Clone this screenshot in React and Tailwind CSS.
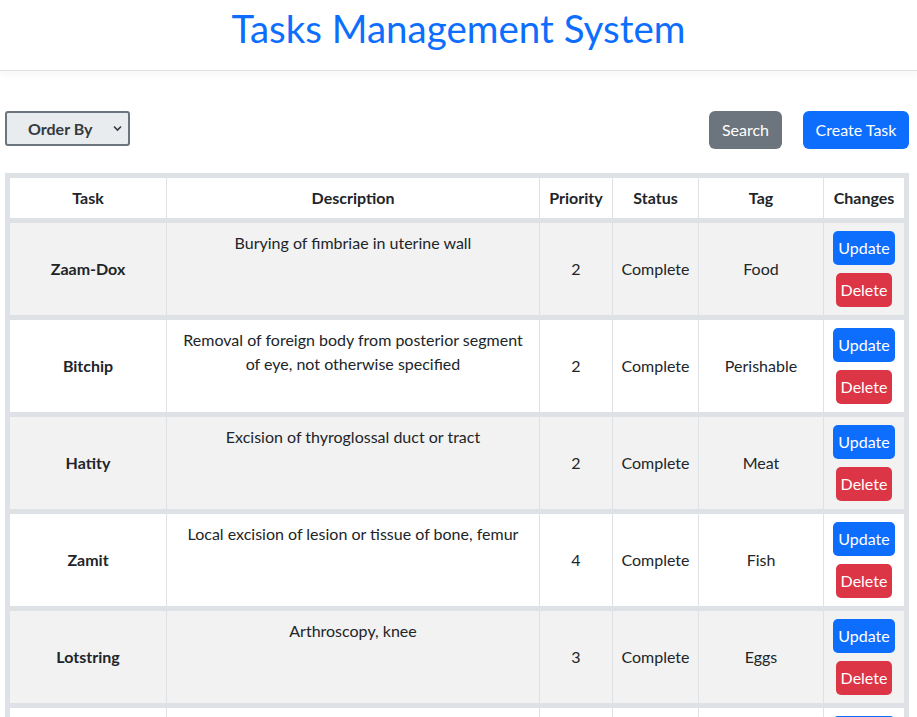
import React from 'react';

const tasks = [
  { name: 'Zaam-Dox', description: 'Burying of fimbriae in uterine wall', priority: 2, status: 'Complete', tag: 'Food' },
  { name: 'Bitchip', description: 'Removal of foreign body from posterior segment of eye, not otherwise specified', priority: 2, status: 'Complete', tag: 'Perishable' },
  { name: 'Hatity', description: 'Excision of thyroglossal duct or tract', priority: 2, status: 'Complete', tag: 'Meat' },
  { name: 'Zamit', description: 'Local excision of lesion or tissue of bone, femur', priority: 4, status: 'Complete', tag: 'Fish' },
  { name: 'Lotstring', description: 'Arthroscopy, knee', priority: 3, status: 'Complete', tag: 'Eggs' },
  { name: 'Tresom', description: 'Other incision of brain', priority: 1, status: 'Complete', tag: 'Dairy' },
];

const App = () => {
  return (
    <div className="min-h-screen bg-white text-[#212529] font-['Lato',sans-serif] text-base">
      {/* Header */}
      <header className="h-[71px] border-b border-[#dee2e6] shadow-[0_4px_8px_rgba(0,0,0,0.04)] flex justify-center">
        <h1 className="text-[38.5px] leading-[56px] text-[#0d6efd]">Tasks Management System</h1>
      </header>

      <div className="pl-[5px] pr-[8px]">
        {/* Controls */}
        <div className="mt-[40px] flex items-start justify-between">
          <div className="relative">
            <select className="appearance-none w-[125px] h-[35px] bg-[#e9ecef] border-2 border-[#6c757d] rounded-[3px] pl-[21px] font-bold text-[#343a40] outline-none">
              <option>Order By</option>
              <option>Priority</option>
              <option>Status</option>
            </select>
            <svg className="absolute right-[8px] top-[14px] pointer-events-none" width="9" height="7" viewBox="0 0 9 7">
              <path d="M1 1.5 L4.5 5 L8 1.5" fill="none" stroke="#343a40" strokeWidth="1.6" />
            </svg>
          </div>
          <div className="flex gap-[21px]">
            <button className="bg-[#6c757d] text-white h-[38px] w-[73px] rounded-[6px]">Search</button>
            <button className="bg-[#0d6efd] text-white h-[38px] w-[106px] rounded-[6px]">Create Task</button>
          </div>
        </div>

        {/* Table */}
        <table className="mt-[24px] w-[904px] table-fixed border-separate border-spacing-0 border-[5px] border-[#dee2e6] text-center">
          <colgroup>
            <col className="w-[157px]" />
            <col className="w-[373px]" />
            <col className="w-[73px]" />
            <col className="w-[86px]" />
            <col className="w-[125px]" />
            <col className="w-[80px]" />
          </colgroup>
          <thead>
            <tr className="bg-white">
              <th className="py-[8px] leading-[24px] px-[2px] font-bold border-b-[5px] border-r border-[#dee2e6]">Task</th>
              <th className="py-[8px] leading-[24px] px-[2px] font-bold border-b-[5px] border-r border-[#dee2e6]">Description</th>
              <th className="py-[8px] leading-[24px] px-[2px] font-bold border-b-[5px] border-r border-[#dee2e6]">Priority</th>
              <th className="py-[8px] leading-[24px] px-[2px] font-bold border-b-[5px] border-r border-[#dee2e6]">Status</th>
              <th className="py-[8px] leading-[24px] px-[2px] font-bold border-b-[5px] border-r border-[#dee2e6]">Tag</th>
              <th className="py-[8px] leading-[24px] px-[2px] font-bold border-b-[5px] border-[#dee2e6]">Changes</th>
            </tr>
          </thead>
          <tbody>
            {tasks.map((task, i) => (
              <tr key={task.name} className={i % 2 === 0 ? 'bg-[#f2f2f2]' : 'bg-white'}>
                <td className="font-bold border-b-[5px] border-r border-[#dee2e6] align-middle">{task.name}</td>
                <td className="align-top pt-[8px] px-[10px] leading-[24px] border-b-[5px] border-r border-[#dee2e6]">{task.description}</td>
                <td className="border-b-[5px] border-r border-[#dee2e6]">{task.priority}</td>
                <td className="border-b-[5px] border-r border-[#dee2e6]">{task.status}</td>
                <td className="border-b-[5px] border-r border-[#dee2e6]">{task.tag}</td>
                <td className="py-[8px] border-b-[5px] border-[#dee2e6]">
                  <div className="flex flex-col items-center gap-[8px]">
                    <button className="bg-[#0d6efd] text-white h-[34px] w-[62px] rounded-[5px]">Update</button>
                    <button className="bg-[#dc3545] text-white h-[34px] w-[56px] rounded-[5px]">Delete</button>
                  </div>
                </td>
              </tr>
            ))}
          </tbody>
        </table>
      </div>
    </div>
  );
};

export default App;
